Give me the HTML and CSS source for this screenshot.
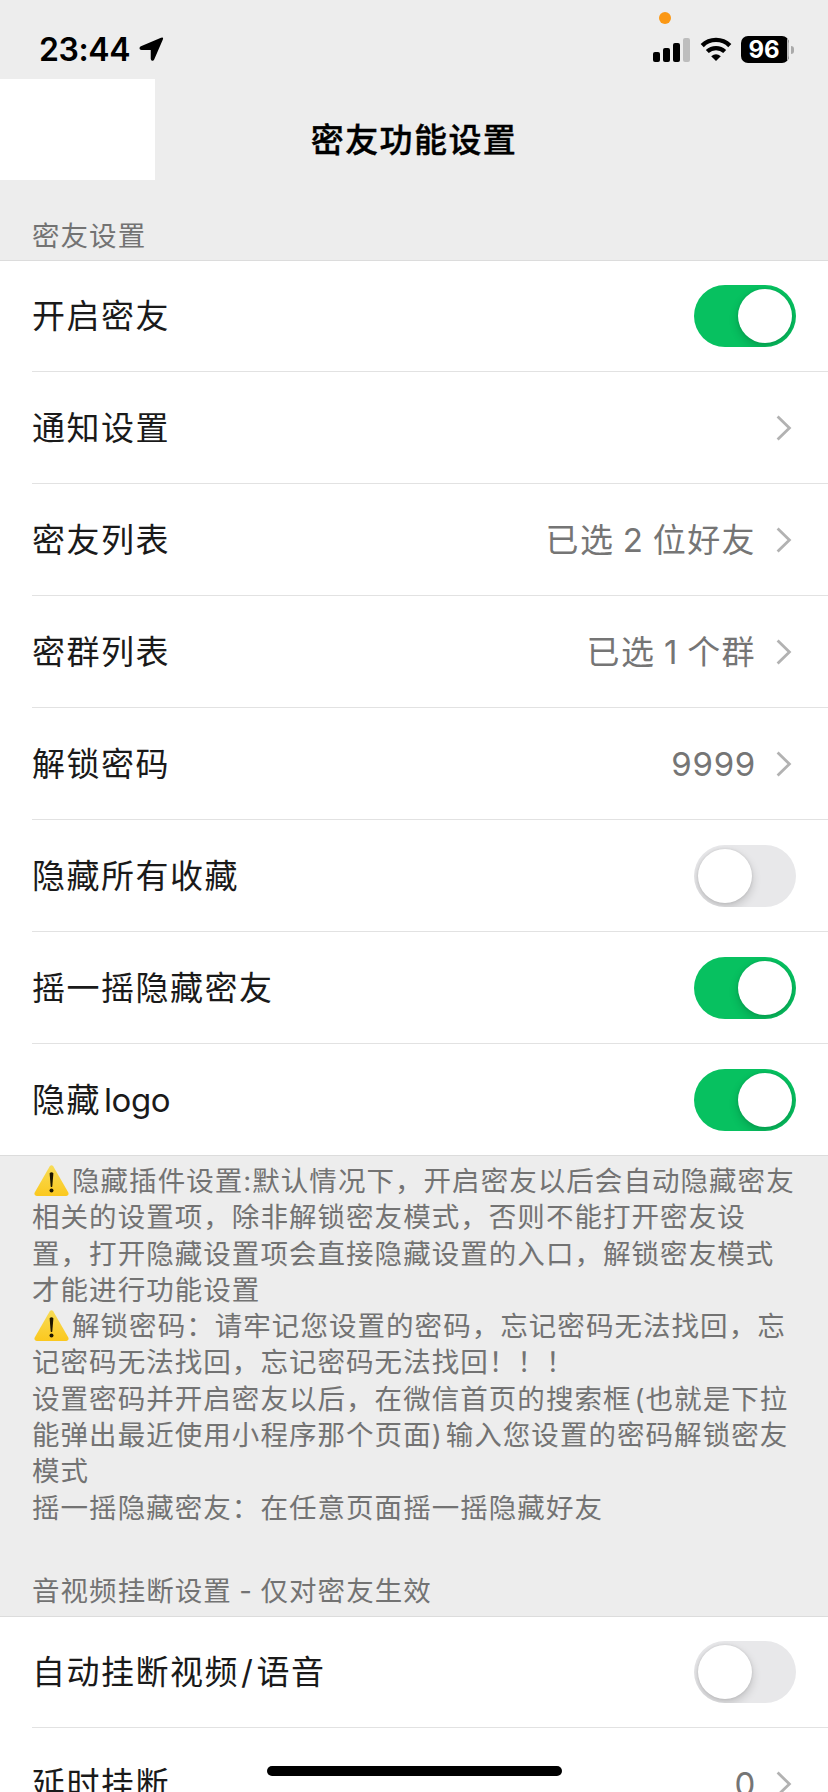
FILE: index.html
```html
<!DOCTYPE html>
<html lang="zh-CN">
<head>
<meta charset="utf-8">
<title>密友功能设置</title>
<link rel="stylesheet" href="styles.css">
</head>
<body>
<svg class="defs" width="0" height="0" aria-hidden="true">
  <defs>
    <linearGradient id="warnFill" x1="0" y1="0" x2="0" y2="1">
      <stop offset="0" stop-color="#f7dc58"/>
      <stop offset="1" stop-color="#fbc81e"/>
    </linearGradient>
    <symbol id="chevron" viewBox="0 0 16 26">
      <path d="M1.6 1.6 13.4 13 1.6 24.4" fill="none" stroke="#b2b2b2" stroke-width="2.8"/>
    </symbol>
    <symbol id="warning" viewBox="0 0 35 31">
      <path d="M15.6 1.5Q17.5-1 19.4 1.5L34.3 27.6Q35.4 30.7 32.3 31H2.7Q-.4 30.7.7 27.6Z" fill="url(#warnFill)"/>
      <path d="M15.6 8.2Q17.5 6.4 19.4 8.2L18.3 21.4Q17.5 22.4 16.7 21.4Z" fill="#1d1600"/>
      <circle cx="17.5" cy="25.5" r="2" fill="#1d1600"/>
    </symbol>
  </defs>
</svg>
<div class="screen">
  <header class="status">
    <div class="status-left">
      <span class="time">23:44</span>
      <svg class="location" viewBox="0 0 26 26"><path d="M22.9.7Q25.8-.4 24.8 2.6L15.8 23.4Q14.7 25.6 12.8 24.1Q12.3 23.5 12.2 22.5V13.4H2.6Q.5 13.2.5 11.6Q.6 10.4 2 9.7Z"/></svg>
    </div>
    <div class="status-right">
      <svg class="signal" viewBox="0 0 38 24">
        <rect x="0" y="14" width="7" height="10" rx="2"/>
        <rect x="10" y="10" width="7" height="14" rx="2"/>
        <rect x="20" y="5" width="7" height="19" rx="2"/>
        <rect x="30" y="0" width="7" height="24" rx="2" fill="#bdbdbd"/>
      </svg>
      <svg class="wifi" viewBox="0 0 32 24">
        <path d="M2.2 8.6A19.6 19.6 0 0 1 29.8 8.6" fill="none" stroke="#000" stroke-width="4.4"/>
        <path d="M7.3 14.6A12.4 12.4 0 0 1 24.7 14.6" fill="none" stroke="#000" stroke-width="4.2"/>
        <path d="M16 24 11.2 19.3Q16 15.4 20.8 19.3Z"/>
      </svg>
      <div class="battery"><span class="battery-level">96</span><i class="battery-rest"></i></div>
      <i class="battery-cap"></i>
    </div>
    <i class="mic-dot"></i>
  </header>

  <nav class="navbar">
    <div class="nav-blank"></div>
    <h1 class="title">密友功能设置</h1>
  </nav>

  <h2 class="section-title first">密友设置</h2>
  <ul class="list">
    <li class="row"><span class="label">开启密友</span><i class="switch on"></i></li>
    <li class="row"><span class="label">通知设置</span><svg class="chevron"><use href="#chevron"/></svg></li>
    <li class="row"><span class="label">密友列表</span><span class="value">已选 2 位好友</span><svg class="chevron"><use href="#chevron"/></svg></li>
    <li class="row"><span class="label">密群列表</span><span class="value">已选 1 个群</span><svg class="chevron"><use href="#chevron"/></svg></li>
    <li class="row"><span class="label">解锁密码</span><span class="value digits">9999</span><svg class="chevron"><use href="#chevron"/></svg></li>
    <li class="row"><span class="label">隐藏所有收藏</span><i class="switch"></i></li>
    <li class="row"><span class="label">摇一摇隐藏密友</span><i class="switch on"></i></li>
    <li class="row"><span class="label">隐藏<span class="latin">logo</span></span><i class="switch on"></i></li>
  </ul>

  <div class="notes">
    <p><svg class="warning"><use href="#warning"/></svg>隐藏插件设置:默认情况下，开启密友以后会自动隐藏密友</p>
    <p>相关的设置项，除非解锁密友模式，否则不能打开密友设</p>
    <p>置，打开隐藏设置项会直接隐藏设置的入口，解锁密友模式</p>
    <p>才能进行功能设置</p>
    <p><svg class="warning"><use href="#warning"/></svg>解锁密码：请牢记您设置的密码，忘记密码无法找回，忘</p>
    <p>记密码无法找回，忘记密码无法找回！！！</p>
    <p>设置密码并开启密友以后，在微信首页的搜索框<span class="paren open">(</span>也就是下拉</p>
    <p>能弹出最近使用小程序那个页面<span class="paren close">)</span>输入您设置的密码解锁密友</p>
    <p>模式</p>
    <p>摇一摇隐藏密友：在任意页面摇一摇隐藏好友</p>
  </div>

  <h2 class="section-title second">音视频挂断设置 - 仅对密友生效</h2>
  <ul class="list">
    <li class="row"><span class="label">自动挂断视频<span class="slash">/</span>语音</span><i class="switch"></i></li>
    <li class="row"><span class="label">延时挂断</span><span class="value digits">0</span><svg class="chevron"><use href="#chevron"/></svg></li>
  </ul>
  <i class="home-indicator"></i>
</div>
</body>
</html>
```
FILE: styles.css
```css
* { box-sizing: border-box; margin: 0; padding: 0; }

body {
  background: #ededed;
  font-family: Inter, "Noto Sans CJK SC", sans-serif;
  text-spacing-trim: space-all;
  overflow: hidden;
}

.defs { position: absolute; }

.screen {
  position: relative;
  width: 828px;
  height: 1792px;
  overflow: hidden;
  background: #ededed;
  white-space: nowrap;
}

/* status bar */
.status {
  position: relative;
  display: flex;
  justify-content: space-between;
  height: 79px;
  padding: 36px 34px 0 39px;
}
.status-left { display: flex; align-items: flex-start; }
.time {
  width: 100px;
  font-size: 32px;
  line-height: 28px;
  font-weight: 600;
  letter-spacing: -0.4px;
}
.location { width: 25px; height: 25px; margin-top: 1px; }
.status-right { display: flex; align-items: flex-start; }
.signal { width: 38px; height: 24px; margin-top: 2px; }
.wifi { width: 32px; height: 24px; margin: 1px 0 0 9px; }
.battery {
  display: flex;
  width: 48px;
  height: 27px;
  margin-left: 9px;
  border-radius: 7px;
  overflow: hidden;
  background: #000;
}
.battery-level {
  width: 46px;
  color: #fff;
  text-align: center;
  font-size: 24px;
  line-height: 27px;
  font-weight: 700;
}
.battery-rest { width: 2px; background: #bdbdbd; }
.battery-cap {
  width: 3px;
  height: 8px;
  margin: 10px 0 0 2px;
  border-radius: 0 3px 3px 0;
  background: #aaa;
}
.mic-dot {
  position: absolute;
  left: 659px;
  top: 12px;
  width: 12px;
  height: 12px;
  border-radius: 50%;
  background: #fb9815;
}

/* navigation bar */
.navbar {
  display: grid;
  grid-template-columns: 155px 1fr 155px;
  height: 101px;
}
.nav-blank { background: #fff; }
.title {
  padding-top: 37px;
  text-align: center;
  font-size: 33px;
  line-height: 48px;
  font-weight: 500;
  letter-spacing: 1.4px;
  color: #000;
  -webkit-text-stroke: 0.4px #000;
}

.section-title {
  padding-left: 32px;
  font-size: 27.5px;
  font-weight: 400;
  line-height: 40px;
  letter-spacing: 1.05px;
  word-spacing: -1.3px;
  color: #737373;
}
.section-title.first { height: 80px; padding-top: 36px; }
.section-title.second { padding: 44px 0 5px 32px; }

/* settings rows */
.list {
  position: relative;
  list-style: none;
  background: #fff;
  box-shadow: inset 0 1px #dcdcdc;
}
.row {
  display: flex;
  align-items: center;
  height: 112px;
  margin-left: 32px;
  padding-right: 32px;
  border-bottom: 1px solid #e2e2e2;
}
.row:last-child { margin-left: 0; padding-left: 32px; border-color: #dcdcdc; }
.label {
  flex: 1;
  font-size: 33px;
  line-height: 48px;
  letter-spacing: 1.5px;
  color: #1a1a1a;
}
.latin { letter-spacing: -0.4px; margin-left: 3px; }
.slash { margin: 0 2px; }
.value {
  font-size: 33px;
  line-height: 48px;
  letter-spacing: 1.4px;
  word-spacing: -2.2px;
  color: #757575;
}
.digits { letter-spacing: 0.7px; }
.chevron { width: 16px; height: 26px; margin: 0 4px 0 20px; }

.switch {
  display: flex;
  width: 102px;
  height: 62px;
  padding: 4px;
  border-radius: 31px;
  overflow: hidden;
  background: #e8e8ea;
}
.switch::before {
  content: "";
  width: 54px;
  height: 54px;
  border-radius: 50%;
  background: #fff;
  box-shadow: 0 4px 10px rgba(0, 0, 0, .18), 0 0 3px rgba(0, 0, 0, .1);
}
.switch.on { justify-content: flex-end; background: #07c160; }

/* explanatory notes */
.notes {
  height: 371px;
  padding: 7px 0 0 32px;
  font-size: 27.5px;
  line-height: 36.3px;
  letter-spacing: 1.05px;
  color: #737373;
}
.notes p { height: 36.3px; }
.warning { width: 35px; height: 31px; margin: 0 3px 0 2px; vertical-align: -5px; }
.paren { display: inline-block; width: 14px; }
.open { text-align: right; }

.home-indicator {
  position: absolute;
  left: 267px;
  top: 1766px;
  width: 295px;
  height: 10px;
  border-radius: 5px;
  background: #000;
}
```
